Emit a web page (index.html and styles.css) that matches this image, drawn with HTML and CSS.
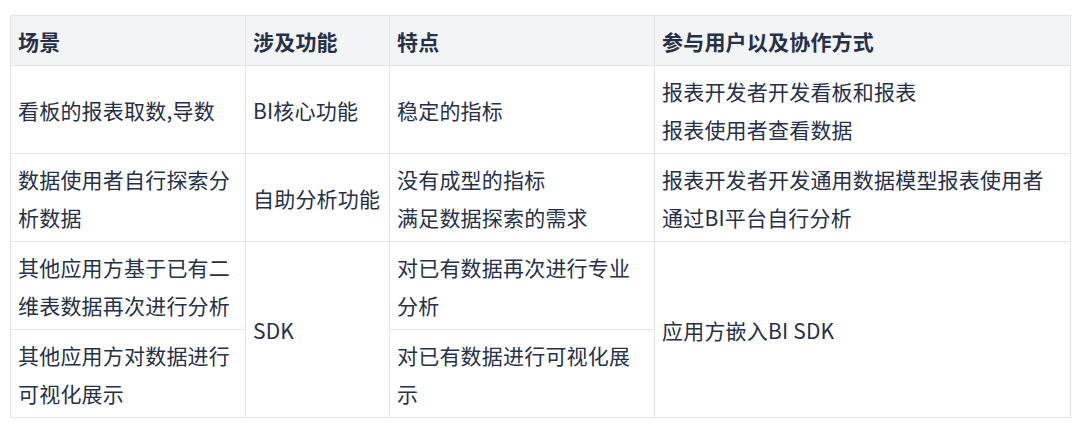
FILE: index.html
```html
<!DOCTYPE html>
<html lang="zh">
<head>
<meta charset="utf-8">
<link rel="stylesheet" href="styles.css">
</head>
<body>
<table class="grid">
  <colgroup>
    <col class="c1"><col class="c2"><col class="c3"><col class="c4">
  </colgroup>
  <thead>
    <tr><th>场景</th><th>涉及功能</th><th>特点</th><th>参与用户以及协作方式</th></tr>
  </thead>
  <tbody>
    <tr>
      <td>看板的报表取数,导数</td>
      <td>BI核心功能</td>
      <td>稳定的指标</td>
      <td>报表开发者开发看板和报表<br>报表使用者查看数据</td>
    </tr>
    <tr>
      <td>数据使用者自行探索分析数据</td>
      <td>自助分析功能</td>
      <td>没有成型的指标<br>满足数据探索的需求</td>
      <td>报表开发者开发通用数据模型报表使用者通过BI平台自行分析</td>
    </tr>
    <tr>
      <td>其他应用方基于已有二维表数据再次进行分析</td>
      <td rowspan="2">SDK</td>
      <td>对已有数据再次进行专业分析</td>
      <td rowspan="2">应用方嵌入BI SDK</td>
    </tr>
    <tr>
      <td>其他应用方对数据进行可视化展示</td>
      <td>对已有数据进行可视化展示</td>
    </tr>
  </tbody>
</table>
</body>
</html>
```

FILE: styles.css
```css
html, body {
  margin: 0;
  padding: 0;
  background: #ffffff;
}
body {
  padding: 15px 10px 0 10px;
  font-family: "Noto Sans CJK SC", "Noto Sans", sans-serif;
  color: #253049;
}
.grid {
  border-collapse: collapse;
  table-layout: fixed;
  width: 1060px;
  font-size: 21px;
  line-height: 38px;
  letter-spacing: 0.2px;
}
.c1 { width: 235px; }
.c2 { width: 144px; }
.c3 { width: 265px; }
.c4 { width: 416px; }
.grid th, .grid td {
  border: 1.5px solid #e3e4e6;
  padding: 5.5px 7px;
  text-align: left;
  vertical-align: middle;
  word-break: break-all;
}
.grid th {
  background: #f3f4f6;
  font-weight: 700;
}
```
